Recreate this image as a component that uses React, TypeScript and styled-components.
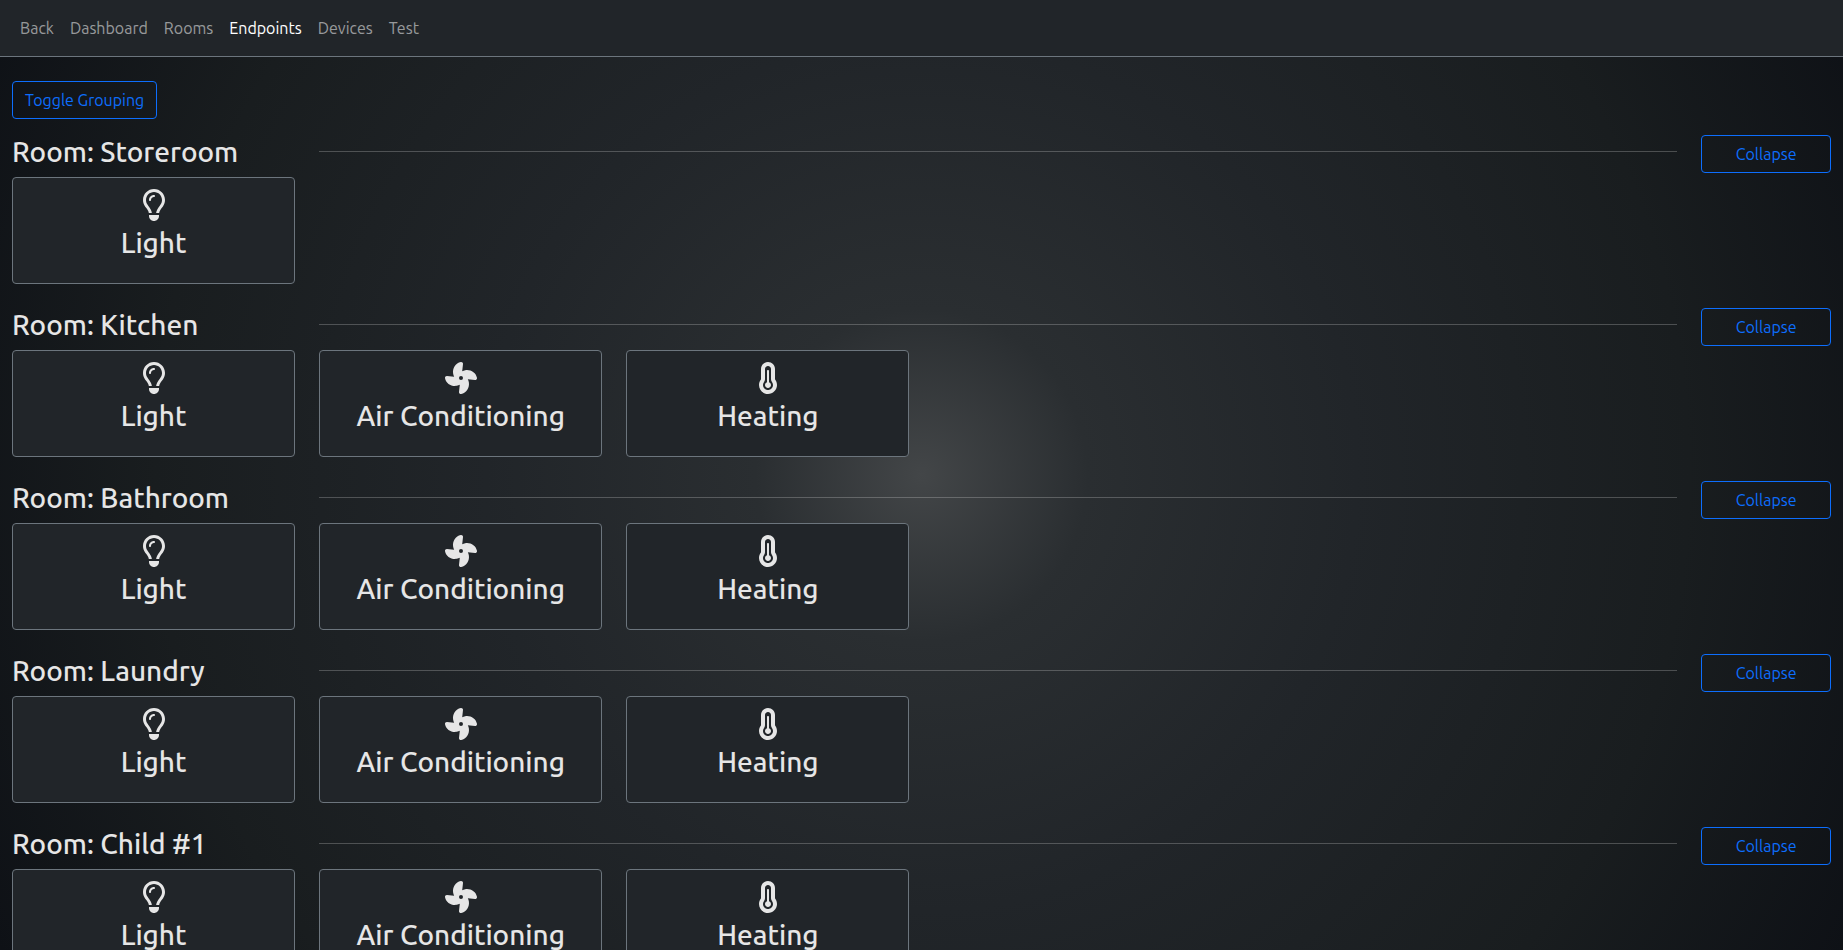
import React, { useState } from "react";
import styled, { createGlobalStyle } from "styled-components";
import { FaFan, FaRegLightbulb, FaTemperatureThreeQuarters } from "react-icons/fa6";

const GlobalStyle = createGlobalStyle`
  *, *::before, *::after {
    box-sizing: border-box;
  }
  body {
    margin: 0;
    min-height: 100vh;
    color: #e6e6e6;
    font-family: Ubuntu, "Noto Sans", sans-serif;
    font-size: 16px;
    line-height: 24px;
    background: #101317 radial-gradient(circle, #434648 0%, #2a2e31 16%, #212529 42%, #191d1f 74%, #0e1116 100%) fixed;
  }
`;

const NavBar = styled.nav`
  display: flex;
  align-items: center;
  padding: 8px 12px;
  background: #212529;
  border-bottom: 1px solid #6c757d;
`;

const NavLink = styled.a<{ $active?: boolean }>`
  padding: 8px;
  color: ${(p) => (p.$active ? "#ffffff" : "rgba(255, 255, 255, 0.55)")};
  text-decoration: none;
`;

const Content = styled.main`
  padding: 24px 12px;
`;

const OutlineButton = styled.button`
  height: 38px;
  padding: 6px 12px;
  border: 1px solid #0d6efd;
  border-radius: 4px;
  background: transparent;
  color: #0d6efd;
  font: inherit;
  cursor: pointer;
`;

const RoomSection = styled.section`
  display: grid;
  grid-template-columns: repeat(12, minmax(0, 1fr));
  column-gap: 24px;
  margin-bottom: 24px;

  &:first-of-type {
    margin-top: 16px;
  }
`;

const Heading = styled.h3`
  margin: 0;
  font-size: 28px;
  font-weight: 500;
  line-height: 34px;
  white-space: nowrap;
`;

const RoomTitle = styled(Heading)`
  grid-column: span 2;
  margin-bottom: 8px;
`;

const Divider = styled.hr`
  grid-column: span 9;
  width: 100%;
  height: 1px;
  margin: 16px 0 0;
  border: 0;
  background: #e6e6e6;
  opacity: 0.25;
`;

const CollapseSlot = styled.div`
  display: grid;
  height: 42px;
  align-items: start;
`;

const EndpointCard = styled.article`
  grid-column: span 2;
  display: flex;
  flex-direction: column;
  align-items: center;
  gap: 5px;
  height: 107px;
  padding: 11px 8px;
  border: 1px solid #6c757d;
  border-radius: 4px;
  background: #212529;

  svg {
    flex: none;
    height: 32px;
    width: auto;
  }
`;

const endpoints = {
  light: { name: "Light", Icon: FaRegLightbulb },
  air: { name: "Air Conditioning", Icon: FaFan },
  heating: { name: "Heating", Icon: FaTemperatureThreeQuarters },
};

type EndpointKey = keyof typeof endpoints;

const allEndpoints: EndpointKey[] = ["light", "air", "heating"];

const rooms: { name: string; items: EndpointKey[] }[] = [
  { name: "Storeroom", items: ["light"] },
  { name: "Kitchen", items: allEndpoints },
  { name: "Bathroom", items: allEndpoints },
  { name: "Laundry", items: allEndpoints },
  { name: "Child #1", items: allEndpoints },
];

const pages = ["Back", "Dashboard", "Rooms", "Endpoints", "Devices", "Test"];

function Room({ name, items }: { name: string; items: EndpointKey[] }) {
  const [open, setOpen] = useState(true);
  return (
    <RoomSection>
      <RoomTitle>Room: {name}</RoomTitle>
      <Divider />
      <CollapseSlot>
        <OutlineButton type="button" aria-expanded={open} onClick={() => setOpen(!open)}>
          {open ? "Collapse" : "Expand"}
        </OutlineButton>
      </CollapseSlot>
      {open &&
        items.map((key) => {
          const { name: label, Icon } = endpoints[key];
          return (
            <EndpointCard key={key}>
              <Icon aria-hidden />
              <Heading>{label}</Heading>
            </EndpointCard>
          );
        })}
    </RoomSection>
  );
}

export default function App() {
  return (
    <>
      <GlobalStyle />
      <NavBar>
        {pages.map((page) => (
          <NavLink key={page} href="#" $active={page === "Endpoints"}>
            {page}
          </NavLink>
        ))}
      </NavBar>
      <Content>
        <OutlineButton type="button">Toggle Grouping</OutlineButton>
        {rooms.map((room) => (
          <Room key={room.name} {...room} />
        ))}
      </Content>
    </>
  );
}
